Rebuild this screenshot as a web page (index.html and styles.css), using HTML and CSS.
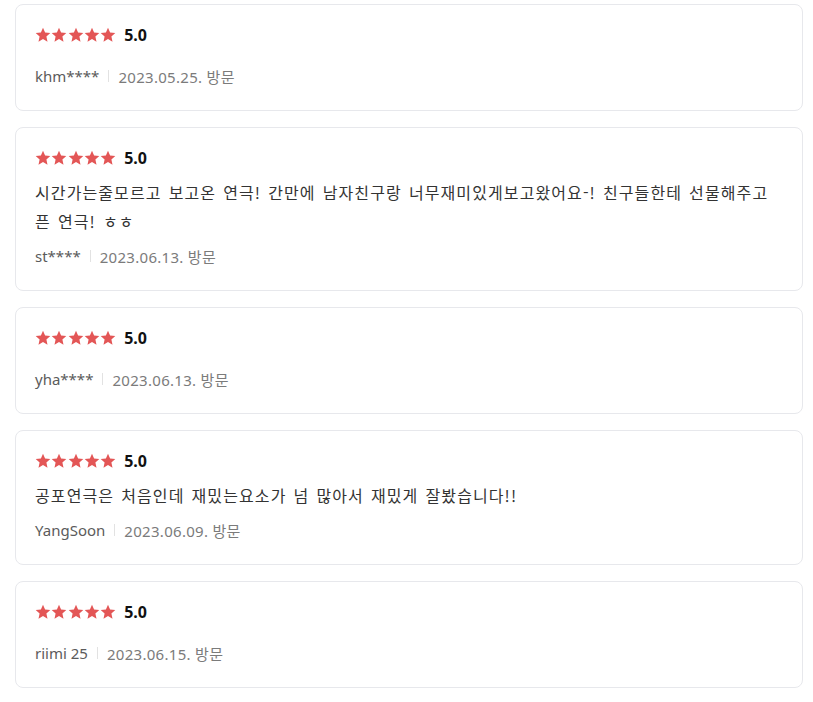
FILE: index.html
```html
<!DOCTYPE html>
<html lang="ko">
<head>
<meta charset="utf-8">
<link rel="stylesheet" href="styles.css">
</head>
<body>
<svg width="0" height="0" class="defs">
  <defs>
    <symbol id="star" viewBox="0 0 16 16"><polygon points="8,0.8 10.1,5.6 15.3,6.1 11.4,9.6 12.5,14.8 8,12.1 3.5,14.8 4.6,9.6 0.7,6.1 5.9,5.6" fill="#e35656"/></symbol>
  </defs>
</svg>
<div class="list">
  <div class="card">
    <div class="rating">
      <span class="stars"><svg><use href="#star"/></svg><svg><use href="#star"/></svg><svg><use href="#star"/></svg><svg><use href="#star"/></svg><svg><use href="#star"/></svg></span>
      <span class="score">5.0</span>
    </div>
    <div class="meta"><span class="user">khm****</span><span class="sep"></span><span class="date">2023.05.25. 방문</span></div>
  </div>
  <div class="card">
    <div class="rating">
      <span class="stars"><svg><use href="#star"/></svg><svg><use href="#star"/></svg><svg><use href="#star"/></svg><svg><use href="#star"/></svg><svg><use href="#star"/></svg></span>
      <span class="score">5.0</span>
    </div>
    <p class="text">시간가는줄모르고 보고온 연극! 간만에 남자친구랑 너무재미있게보고왔어요-! 친구들한테 선물해주고 픈 연극! ㅎㅎ</p>
    <div class="meta"><span class="user">st****</span><span class="sep"></span><span class="date">2023.06.13. 방문</span></div>
  </div>
  <div class="card">
    <div class="rating">
      <span class="stars"><svg><use href="#star"/></svg><svg><use href="#star"/></svg><svg><use href="#star"/></svg><svg><use href="#star"/></svg><svg><use href="#star"/></svg></span>
      <span class="score">5.0</span>
    </div>
    <div class="meta"><span class="user">yha****</span><span class="sep"></span><span class="date">2023.06.13. 방문</span></div>
  </div>
  <div class="card">
    <div class="rating">
      <span class="stars"><svg><use href="#star"/></svg><svg><use href="#star"/></svg><svg><use href="#star"/></svg><svg><use href="#star"/></svg><svg><use href="#star"/></svg></span>
      <span class="score">5.0</span>
    </div>
    <p class="text">공포연극은 처음인데 재밌는요소가 넘 많아서 재밌게 잘봤습니다!!</p>
    <div class="meta"><span class="user">YangSoon</span><span class="sep"></span><span class="date">2023.06.09. 방문</span></div>
  </div>
  <div class="card">
    <div class="rating">
      <span class="stars"><svg><use href="#star"/></svg><svg><use href="#star"/></svg><svg><use href="#star"/></svg><svg><use href="#star"/></svg><svg><use href="#star"/></svg></span>
      <span class="score">5.0</span>
    </div>
    <div class="meta"><span class="user">riimi 25</span><span class="sep"></span><span class="date">2023.06.15. 방문</span></div>
  </div>
</div>
</body>
</html>
```
FILE: styles.css
```css
* { box-sizing: border-box; }
html, body { background: #fff; }
body {
  margin: 0;
  padding: 4px 10px 0 15px;
  font-family: "Noto Sans", "Noto Sans CJK KR", sans-serif;
  color: #222;
}
.defs { position: absolute; width: 0; height: 0; }
.list {
  display: flex;
  flex-direction: column;
  gap: 16px;
}
.card {
  border: 1px solid #e7e8ec;
  border-radius: 8px;
  padding: 19px 19px 23px;
}
.rating {
  display: flex;
  align-items: center;
  height: 22px;
  gap: 8px;
}
.stars {
  display: flex;
  gap: 0.3px;
}
.stars svg {
  width: 16px;
  height: 16px;
  display: block;
}
.score {
  font-size: 16px;
  font-weight: 700;
  color: #111;
  line-height: 22px;
}
.text {
  margin: 9px 0 0;
  font-family: "Noto Sans CJK KR", sans-serif;
  font-size: 16px;
  line-height: 29px;
  color: #333;
  letter-spacing: 1.1px;
  word-spacing: 1.5px;
}
.meta {
  margin-top: 19px;
  display: flex;
  align-items: center;
  height: 22px;
  font-size: 15px;
}
.text + .meta { margin-top: 9px; }
.user { color: #5b5b5b; }
.sep {
  width: 1px;
  height: 12px;
  background: #e2e2e2;
  margin: 0 9px;
}
.date { color: #7b7b7b; letter-spacing: 0.3px; }
```
